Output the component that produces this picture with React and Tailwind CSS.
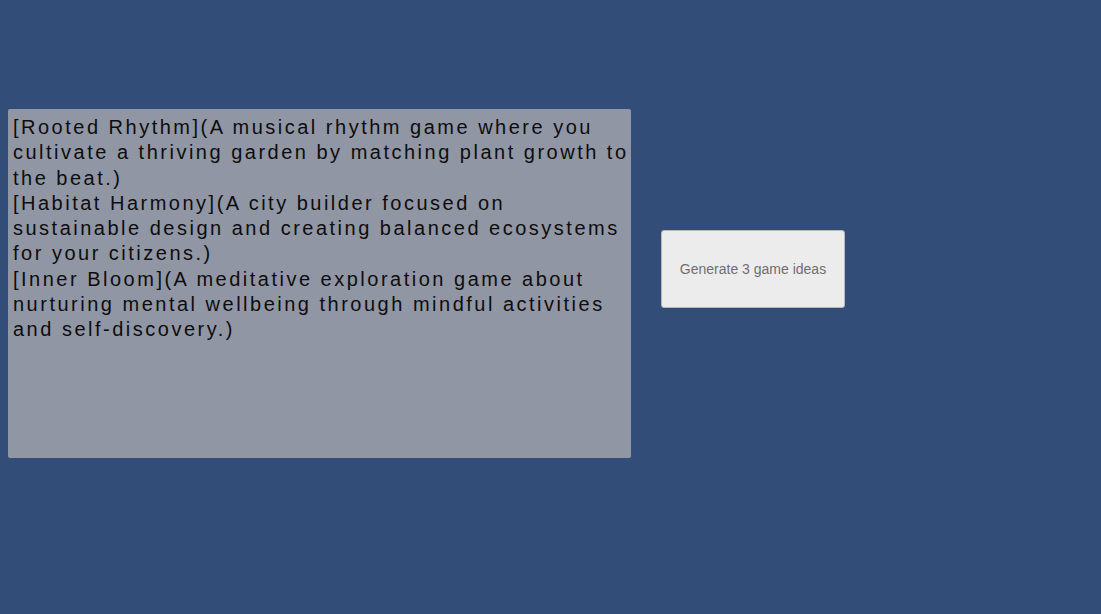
export default function App() {
  return (
    <div className="w-full h-[614px] bg-[#314d78] flex items-start pt-[109px] pl-[8px] gap-[30px]">
      <div className="w-[623px] h-[349px] bg-[#9196a5] rounded-[2px] pl-[5px] pt-[6px]">
        <p
          className="w-[624px] text-[20px] leading-[25.3px] text-[#0d0d0d] tracking-[2.5px]"
          style={{ fontFamily: '"Liberation Sans", Arial, sans-serif' }}
        >
          [Rooted Rhythm](A musical rhythm game where you cultivate a thriving garden by matching plant growth to the beat.)
          <br />
          [Habitat Harmony](A city builder focused on sustainable design and creating balanced ecosystems for your citizens.)
          <br />
          [Inner Bloom](A meditative exploration game about nurturing mental wellbeing through mindful activities and self-discovery.)
        </p>
      </div>
      <button
        className="mt-[121px] w-[184px] h-[78px] bg-[#ececec] border border-[#b8b8b8] rounded-[3px] text-[14px] text-[#6f6f6f] flex items-center justify-center"
        style={{ fontFamily: '"Liberation Sans", Arial, sans-serif' }}
      >
        Generate 3 game ideas
      </button>
    </div>
  );
}
